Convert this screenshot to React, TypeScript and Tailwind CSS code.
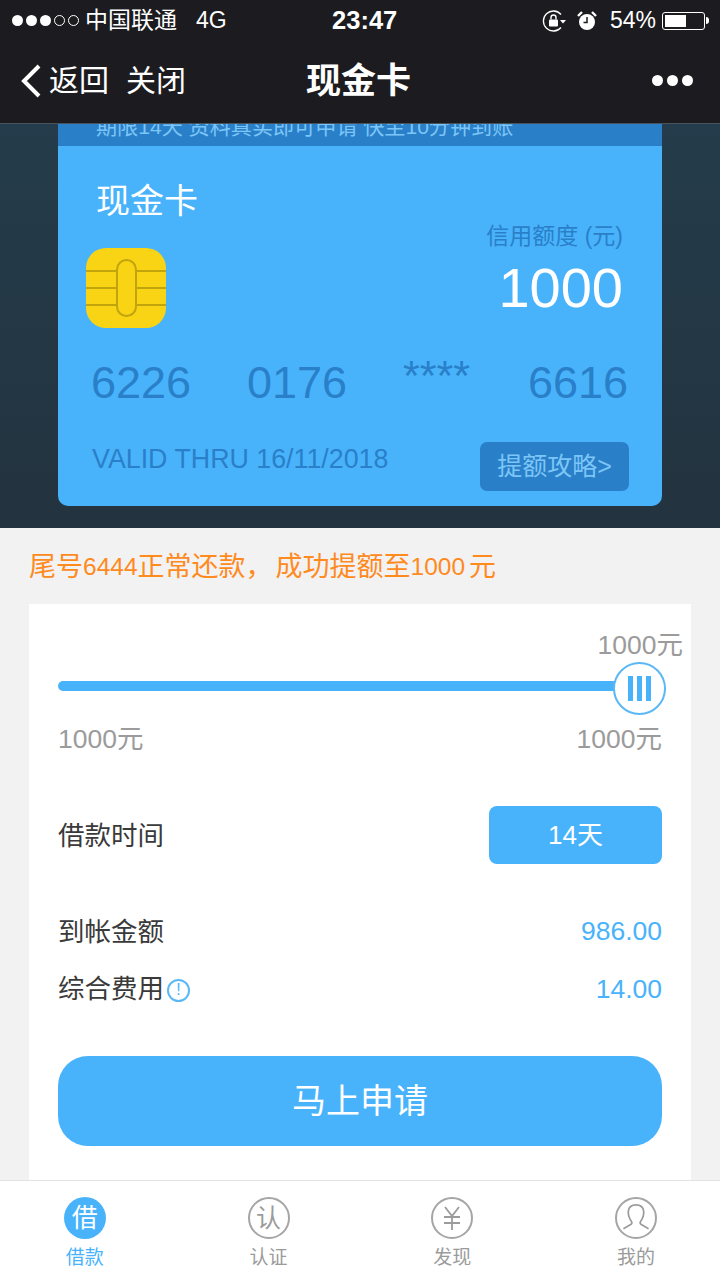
const FONT = '"Liberation Sans", "Noto Sans CJK SC", sans-serif';

function StatusBar() {
  return (
    <div className="flex h-[41px] items-center pl-[12px] pr-[11px] text-white">
      <div className="flex items-center gap-[3px]">
        {[0, 1, 2].map((i) => (
          <span key={i} className="h-[11px] w-[11px] rounded-full bg-white" />
        ))}
        {[0, 1].map((i) => (
          <span key={i} className="h-[11px] w-[11px] rounded-full border border-white" />
        ))}
      </div>
      <span className="ml-[6px] w-[92px] text-[23px] leading-none">中国联通</span>
      <span className="ml-[19px] text-[23px] leading-none">4G</span>
      <span className="ml-[105px] w-[66px] text-center text-[25.500px] font-bold leading-none">23:47</span>
      <div className="ml-auto flex items-center">
        <svg width="24" height="24" viewBox="0 0 24 24" fill="none" className="mr-[10px]">
          <path d="M19 5.500A10 10 0 1 0 19 18.500" stroke="#fff" strokeWidth="1.300" />
          <path d="M18 11h6l-3 3.500z" fill="#fff" />
          <rect x="7" y="10.500" width="9" height="7" rx="1" fill="#fff" />
          <path d="M9 10.500V8.500a2.500 2.500 0 0 1 5 0v2" stroke="#fff" strokeWidth="1.400" />
        </svg>
        <svg width="22" height="22" viewBox="0 0 22 22" className="mr-[12px]">
          <circle cx="11" cy="12" r="8" fill="#fff" />
          <path d="M11 7v5.500H7.500" stroke="#1c1c20" strokeWidth="1.500" fill="none" />
          <path d="M2 6l4-4M20 6l-4-4" stroke="#fff" strokeWidth="2.400" />
        </svg>
        <span className="mr-[6px] text-[23px] leading-none">54%</span>
        <div className="flex h-[18px] w-[43px] items-center rounded-[3px] border border-white p-[2px]">
          <div className="h-full w-[21px] bg-white" />
        </div>
        <div className="ml-[1px] h-[7px] w-[3px] rounded-r-full bg-white" />
      </div>
    </div>
  );
}

function NavBar() {
  return (
    <div className="flex h-[83px] items-center border-b border-[#47525b] pb-[3px] pl-[20px] pr-[27px] text-white">
      <svg width="22" height="34" viewBox="0 0 22 34" fill="none">
        <path d="M19 2 4 17l15 15" stroke="#fff" strokeWidth="4" />
      </svg>
      <span className="ml-[7px] text-[30px] leading-none">返回</span>
      <span className="ml-[17px] text-[30px] leading-none">关闭</span>
      <span className="flex-1 pr-[121px] text-center text-[35px] font-bold leading-none">现金卡</span>
      <div className="flex gap-[4px]">
        {[0, 1, 2].map((i) => (
          <span key={i} className="h-[11px] w-[11px] rounded-full bg-white" />
        ))}
      </div>
    </div>
  );
}

function Chip() {
  return (
    <svg width="80" height="80" viewBox="0 0 80 80" className="mt-[26px]">
      <rect width="80" height="80" rx="20" fill="#f8d414" />
      <path d="M0 23h31M0 40h31M0 57h31M49 23h31M49 40h31M49 57h31" stroke="#c2a40c" strokeWidth="2" />
      <rect x="31" y="12" width="19" height="56" rx="9.500" fill="#f8d414" stroke="#c2a40c" strokeWidth="2" />
    </svg>
  );
}

function Card() {
  return (
    <div className="flex h-[360px] flex-col rounded-b-[10px] bg-[#48b3fb] pl-[28px] pr-[34px]">
      <div className="flex items-start justify-between">
        <div className="flex flex-col">
          <span className="ml-[10px] mt-[34px] text-[34px] leading-[42px] text-white">现金卡</span>
          <Chip />
        </div>
        <div className="mt-[75px] flex flex-col items-end pr-[5px]">
          <span className="text-[23px] leading-[30px] text-[#2a7fc9]">信用额度 (元)</span>
          <span className="mt-[7px] text-[56px] leading-[60px] text-white">1000</span>
        </div>
      </div>
      <div className="ml-[5px] mt-[30px] flex items-center text-[#2a7fc9]">
        <span className="w-[156px] text-[45px] leading-[50px]">6226</span>
        <span className="w-[156px] text-[45px] leading-[50px]">0176</span>
        <span className="w-[125px] -translate-y-[8px] text-[43px] leading-[38px]">****</span>
        <span className="text-[45px] leading-[50px]">6616</span>
      </div>
      <div className="mt-[34px] flex items-start justify-between">
        <span className="ml-[6px] mt-[4px] text-[26.800px] leading-none text-[#2a7fc9]">VALID THRU 16/11/2018</span>
        <span className="-mr-[1px] flex h-[49px] w-[149px] items-center justify-center rounded-[7px] bg-[#2a7fc9] text-[25px] text-[#7cc6f7]">提额攻略&gt;</span>
      </div>
    </div>
  );
}

function Slider() {
  return (
    <div className="flex flex-col">
      <div className="-mr-[21px] mt-[26px] text-right text-[26.500px] leading-[30px] text-[#9b9b9b]">1000元</div>
      <div className="relative mt-[2px] h-[52px]">
        <div className="absolute left-0 right-[4px] top-[19px] h-[10px] rounded-full bg-[#48b3fb]" />
        <div className="absolute right-[-4px] top-0 flex h-[53px] w-[53px] items-center justify-center gap-[4px] rounded-full border-2 border-[#5bb8f5] bg-white">
          {[0, 1, 2].map((i) => (
            <span key={i} className="h-[25px] w-[5px] bg-[#48b3fb]" />
          ))}
        </div>
      </div>
      <div className="mt-[10px] flex justify-between text-[26.500px] leading-[30px] text-[#9b9b9b]">
        <span>1000元</span>
        <span>1000元</span>
      </div>
    </div>
  );
}

function Panel() {
  return (
    <div className="mx-[29px] flex-1 bg-white px-[29px]">
      <Slider />
      <div className="mt-[52px] flex h-[58px] items-center justify-between">
        <span className="pt-[3px] text-[26.500px] text-[#3a3a3a]">借款时间</span>
        <span className="flex h-[58px] w-[173px] items-center justify-center rounded-[8px] bg-[#48b3fb] text-[26px] text-white">14天</span>
      </div>
      <div className="mt-[38px] flex h-[58px] items-center justify-between">
        <span className="pt-[3px] text-[26.500px] text-[#3a3a3a]">到帐金额</span>
        <span className="-mr-[1px] pr-[1px] pt-[2px] text-[26.500px] text-[#48b3fb]">986.00</span>
      </div>
      <div className="flex h-[58px] items-center justify-between">
        <span className="flex items-center gap-[3px] pt-[2px] text-[26.500px] text-[#3a3a3a]">
          综合费用
          <span className="flex h-[23px] w-[23px] items-center justify-center rounded-full border-2 border-[#5bb8f5] text-[16px] leading-none text-[#48b3fb]">!</span>
        </span>
        <span className="pt-[2px] text-[26.500px] text-[#48b3fb]">14.00</span>
      </div>
      <button className="mt-[38px] flex h-[90px] w-full items-center justify-center rounded-[30px] bg-[#48b3fb] text-[34px] text-white">马上申请</button>
    </div>
  );
}

const TABS = [
  { label: "借款", glyph: "借", active: true },
  { label: "认证", glyph: "认" },
  { label: "发现", icon: "yen" },
  { label: "我的", icon: "user" },
];

function TabIcon({ icon }: { icon?: string }) {
  if (icon === "yen") {
    return (
      <svg width="24" height="28" viewBox="0 0 24 28" fill="none">
        <path d="M5 3l7 9 7-9M12 12v14M4 13h16M4 19h16" stroke="#9b9b9b" strokeWidth="1.800" />
      </svg>
    );
  }
  return (
    <svg width="30" height="32" viewBox="0 0 26 28" fill="none">
      <path d="M9 17C6.500 13.500 6 11 6.300 8c.4-3.500 3.200-5.500 6.700-5.500s6.300 2 6.700 5.500c.3 3-.2 5.500-2.700 9-.8 1.200-.3 2.300 1 3L24 23.500M2 23.500 8 20c1.300-.7 1.800-1.800 1-3" stroke="#9b9b9b" strokeWidth="1.500" />
    </svg>
  );
}

function TabBar() {
  return (
    <div className="h-[100px] border-t border-[#e2e2e2] bg-white">
      <div className="-ml-[7px] grid grid-cols-[repeat(4,183.700px)]">
        {TABS.map((t) => (
          <div key={t.label} className="flex flex-col items-center pt-[16px]">
            <div
              className={
                t.active
                  ? "flex h-[42px] w-[42px] items-center justify-center rounded-full bg-[#48b3fb] text-[26px] leading-none text-white"
                  : "flex h-[42px] w-[42px] items-center justify-center rounded-full border-2 border-[#a5a5a5] text-[25px] leading-none text-[#9b9b9b]"
              }
            >
              {t.glyph ?? <TabIcon icon={t.icon} />}
            </div>
            <span className={t.active ? "mt-[5px] text-[19px] leading-[28px] text-[#48b3fb]" : "mt-[5px] text-[19px] leading-[28px] text-[#9b9b9b]"}>{t.label}</span>
          </div>
        ))}
      </div>
    </div>
  );
}

export default function App() {
  return (
    <div className="flex h-[1280px] w-[720px] flex-col overflow-hidden bg-[#f2f2f2]" style={{ fontFamily: FONT }}>
      <div className="bg-[#1c1c20]">
        <StatusBar />
        <NavBar />
      </div>
      <div className="h-[404px] bg-gradient-to-b from-[#243c4b] to-[#23333f] px-[58px]">
        <div className="h-[22px] overflow-hidden bg-[#2a7fc9] pl-[38px]">
          <div className="-mt-[11px] whitespace-pre text-[21.100px] leading-[28px] text-[#7cc6f7]">期限14天 资料真实即可申请 快至10分钟到账</div>
        </div>
        <Card />
      </div>
      <div className="flex h-[76px] items-center pl-[29px] pt-[2px] text-[27px] text-[#ff8a1e]">
        尾号<span className="text-[24.500px]">6444</span>正常还款<span className="mr-[3px]">，</span>成功提额至<span className="text-[24.500px]">1000</span><span className="ml-[4px]">元</span>
      </div>
      <Panel />
      <TabBar />
    </div>
  );
}
